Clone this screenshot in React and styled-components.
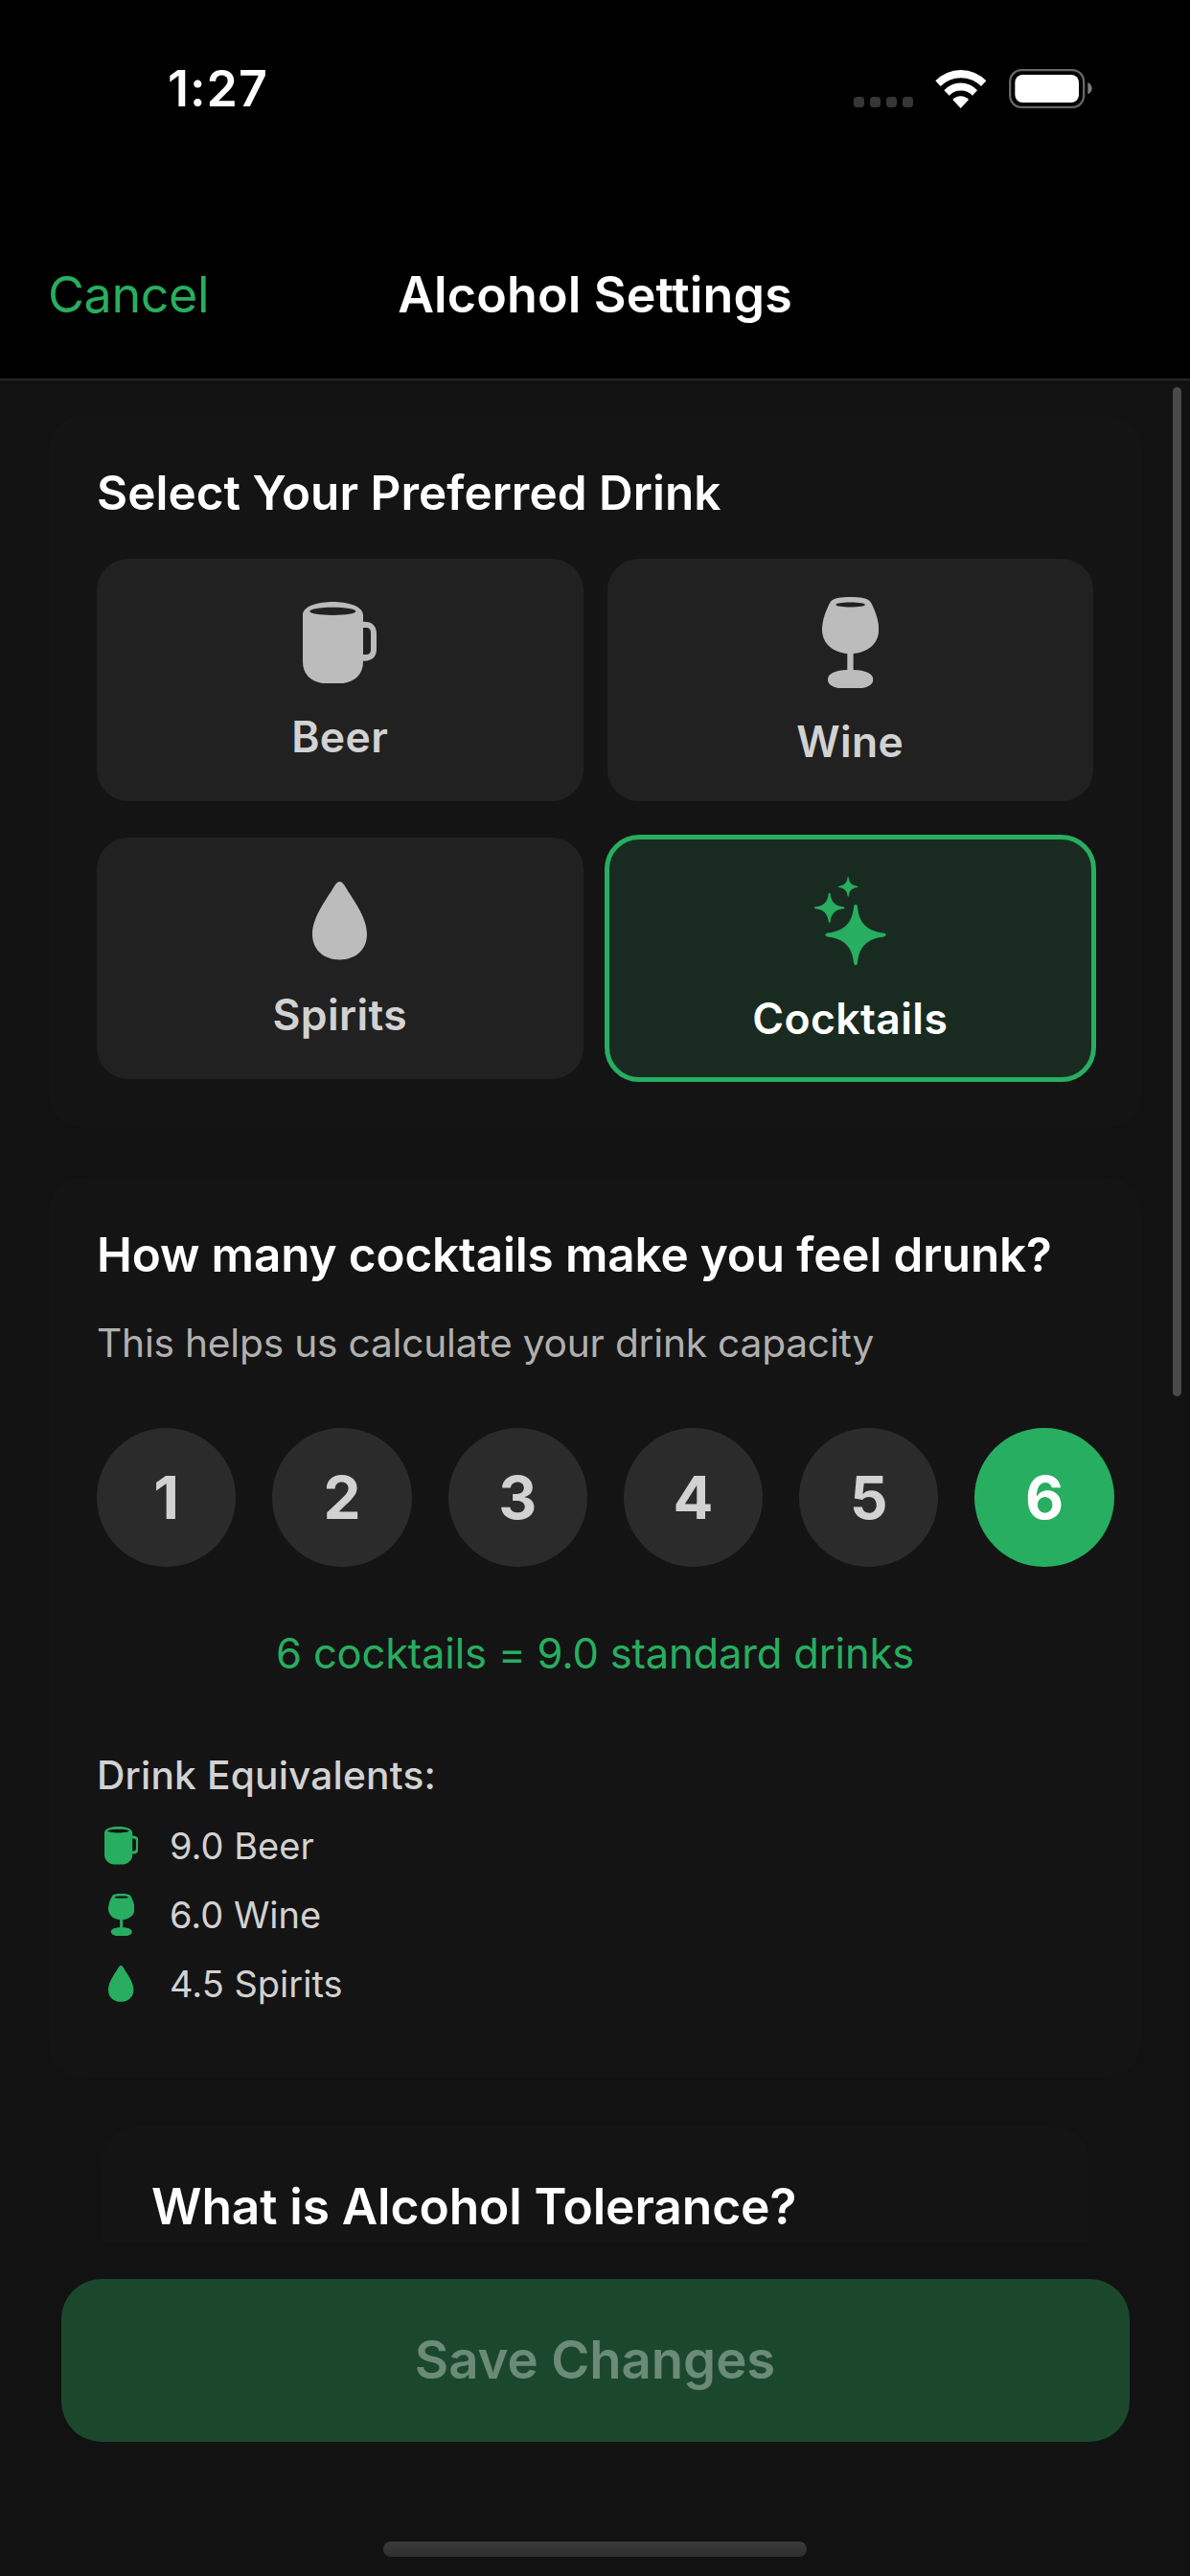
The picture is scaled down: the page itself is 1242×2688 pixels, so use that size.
import React, { useState } from "react";
import styled, { createGlobalStyle } from "styled-components";

const GREEN = "#27ae60";

const GlobalStyle = createGlobalStyle`
  *, *::before, *::after { box-sizing: border-box; }
  body {
    margin: 0;
    background: #121212;
    font-family: Inter, "Liberation Sans", sans-serif;
    -webkit-font-smoothing: antialiased;
  }
  button { font-family: inherit; border: 0; padding: 0; cursor: pointer; }
  h1, h2, p, ul { margin: 0; padding: 0; font-weight: inherit; }
`;

const Screen = styled.div`
  display: flex;
  flex-direction: column;
  width: 1242px;
  height: 2688px;
  overflow: hidden;
  background: #121212;
  color: #fff;
`;

const StatusBar = styled.div`
  display: flex;
  align-items: center;
  height: 185px;
  padding: 0 102px 0 175px;
  background: #000;
`;

const Time = styled.span`
  font-size: 52px;
  font-weight: 600;
  line-height: 64px;
  letter-spacing: 1px;
`;

const StatusIcons = styled.div`
  display: flex;
  align-items: center;
  gap: 23px;
  margin-left: auto;
`;

const SignalDots = styled.div`
  display: flex;
  gap: 6px;
  margin-top: 28px;
`;

const Dot = styled.span`
  width: 11px;
  height: 11px;
  border-radius: 3.5px;
  background: #363636;
`;

const NavBar = styled.header`
  display: grid;
  grid-template-columns: 1fr auto 1fr;
  align-items: center;
  height: 212px;
  padding: 36px 50px 0;
  background: #000;
  border-bottom: 2px solid #262626;
`;

const CancelButton = styled.button`
  justify-self: start;
  background: none;
  color: ${GREEN};
  font-size: 52px;
  font-weight: 400;
  line-height: 64px;
  letter-spacing: -0.39px;
`;

const NavTitle = styled.h1`
  font-size: 52px;
  font-weight: 600;
  line-height: 64px;
  letter-spacing: 0.12px;
`;

const ScrollArea = styled.main`
  position: relative;
  display: flex;
  flex-direction: column;
  gap: 51px;
  height: 1943px;
  padding: 36px 51px 0;
  overflow: hidden;
`;

const ScrollThumb = styled.div`
  position: absolute;
  top: 7px;
  right: 9px;
  width: 9px;
  height: 1053px;
  border-radius: 5px;
  background: #4a4a4a;
`;

const Card = styled.section`
  flex: none;
  height: ${(p) => p.$height}px;
  margin: 0 ${(p) => p.$inset || 0}px;
  padding: 50px 50px 0;
  border-radius: 36px;
  background: #141414;
`;

const CardTitle = styled.h2`
  font-size: ${(p) => (p.$large ? 51.5 : 49.4)}px;
  font-weight: 600;
  line-height: ${(p) => (p.$large ? 66 : 62)}px;
  letter-spacing: ${(p) => p.$tracking}px;
  padding-left: ${(p) => (p.$large ? 2 : 0)}px;
  white-space: nowrap;
`;

const DrinkGrid = styled.div`
  display: grid;
  grid-template-columns: 507.5px 507.5px;
  column-gap: 25px;
  row-gap: 38px;
  margin: 38px -1px 0 0;
`;

const DrinkTile = styled.button`
  display: flex;
  flex-direction: column;
  align-items: center;
  justify-content: flex-start;
  gap: ${(p) => p.$gap}px;
  height: 252.5px;
  padding-top: 39px;
  border-radius: 33px;
  background: ${(p) => (p.$selected ? "#192b20" : "#212121")};
  color: ${(p) => (p.$selected ? "#fff" : "#d2d2d2")};
  outline: ${(p) => (p.$selected ? `5px solid ${GREEN}` : "none")};
  outline-offset: -2.5px;
`;

const TileIcon = styled.span`
  display: flex;
  align-items: center;
  height: 97px;
  color: ${(p) => (p.$selected ? GREEN : "#bcbcbc")};
`;

const TileLabel = styled.span`
  font-size: 44.5px;
  font-weight: 600;
  line-height: 54px;
  letter-spacing: 0.4px;
`;

const Subtitle = styled.p`
  margin-top: 36.5px;
  color: #b0b0b0;
  font-size: 40.7px;
  line-height: 50px;
  letter-spacing: -0.22px;
`;

const CountRow = styled.div`
  display: flex;
  gap: 38px;
  margin-top: 63.5px;
`;

const CountButton = styled.button`
  flex: none;
  width: 145.3px;
  height: 145.3px;
  border-radius: 50%;
  background: ${(p) => (p.$selected ? GREEN : "#2b2b2b")};
  color: ${(p) => (p.$selected ? "#fff" : "#d2d2d2")};
  font-size: 62px;
  font-weight: 700;
  line-height: 145px;
`;

const Summary = styled.p`
  margin-top: 62.5px;
  color: ${GREEN};
  font-size: 43.5px;
  line-height: 54px;
  letter-spacing: -0.18px;
  text-align: center;
`;

const EquivalentsTitle = styled.p`
  margin-top: 76px;
  color: #d2d2d2;
  font-size: 40.7px;
  font-weight: 500;
  line-height: 50px;
  letter-spacing: 0.17px;
`;

const EquivalentsList = styled.ul`
  display: flex;
  flex-direction: column;
  margin-top: 12px;
  list-style: none;
`;

const EquivalentRow = styled.li`
  display: flex;
  align-items: center;
  gap: 25px;
  height: 72px;
  color: #d2d2d2;
  font-size: 38px;
  line-height: 48px;
`;

const EquivalentIcon = styled.span`
  display: flex;
  justify-content: center;
  width: 51px;
  color: ${GREEN};
`;

const Footer = styled.footer`
  display: flex;
  flex: 1;
  flex-direction: column;
  align-items: center;
  justify-content: space-between;
  padding: 38px 63.5px 20px;
  background: #121212;
`;

const SaveButton = styled.button`
  width: 1115px;
  height: 169.7px;
  padding-bottom: 2px;
  border-radius: 42px;
  background: #1b482d;
  color: #6b8b78;
  font-size: 54.5px;
  font-weight: 600;
  letter-spacing: -0.07px;
`;

const HomeIndicator = styled.div`
  width: 442px;
  height: 16px;
  border-radius: 8px;
  background: linear-gradient(#3b3b3b, #2f2f2f);
`;

function BeerIcon({ width }) {
  return (
    <svg width={width} height={(width * 256) / 231} viewBox="78 51 231 256" fill="currentColor" fillRule="evenodd">
      <path d="M78 92C78 63 130 51 172 51S267 63 267 92V113H271C295 113 309 126 309 150V199C309 223 295 236 271 236H267V240C267 281 235 307 190 307H155C110 307 78 281 78 240ZM100 80.500C100 88 132 93 172 93S244 88 244 80.500S212 68 172 68S100 73 100 80.500ZM267 132V216H275C287 216 291 210 291 200V148C291 138 287 132 275 132Z" />
    </svg>
  );
}

function WineIcon({ width }) {
  return (
    <svg width={width} height={(width * 288) / 178} viewBox="52 35 178 288" fill="currentColor" fillRule="evenodd">
      <path d="M141 35C170 35 197 38 205 52C218 75 230 110 230 136C230 178 200 207 150 212V263C188 264 212 274 212 293C212 313 188 323 141 323S70 313 70 293C70 274 94 264 131 263V212C82 207 52 178 52 136C52 110 64 75 77 52C85 38 112 35 141 35ZM95 59C95 63 115 66.500 141 66.500S187 63 187 59S167 51.500 141 51.500S95 55 95 59Z" />
    </svg>
  );
}

function DropIcon({ width }) {
  return (
    <svg width={width} height={(width * 113) / 79} viewBox="0 0 79 113" fill="currentColor">
      <path d="M39.500 0C42.500 0 44.500 2 47.500 7C58 25 79 51 79 76C79 99 62 113 39.500 113S0 99 0 76C0 51 21 25 31.500 7C34.500 2 36.500 0 39.500 0Z" />
    </svg>
  );
}

const STAR =
  "M0 -95Q5 -95 6 -88C10 -38 36 -12 88 -6Q95 -5 95 0Q95 5 88 6C36 12 10 38 6 88Q5 95 0 95Q-5 95 -6 88C-10 38 -36 12 -88 6Q-95 5 -95 0Q-95 -5 -88 -6C-36 -12 -10 -38 -6 -88Q-5 -95 0 -95Z";

function SparklesIcon({ width }) {
  return (
    <svg width={width} height={(width * 277) / 224} viewBox="30 42 224 277" fill="currentColor">
      <path d={STAR} transform="translate(159 223.500)" />
      <path d={STAR} transform="translate(77 139) scale(0.495)" />
      <path d={STAR} transform="translate(135.500 73) scale(0.325)" />
    </svg>
  );
}

function WifiIcon() {
  return (
    <svg width="53.700" height="40" viewBox="317 67 161 120" fill="#fff">
      <path d="M318 101A110 110 0 0 1 477 101L461 118A90.500 90.500 0 0 0 334 118Z" />
      <path d="M345 131A69 69 0 0 1 449 131L434 147A50 50 0 0 0 361 147Z" />
      <path d="M372 160A34 34 0 0 1 422 160L397 187Z" />
    </svg>
  );
}

function BatteryIcon() {
  return (
    <svg width="87" height="41" viewBox="547 65 261 123">
      <rect x="550.500" y="68.500" width="231" height="116" rx="36" fill="none" stroke="#666" strokeWidth="7" />
      <rect x="566" y="83" width="200" height="87" rx="24" fill="#fff" />
      <path d="M794 107Q807 114 807 126T794 144Z" fill="#7d7d7d" />
    </svg>
  );
}

const DRINKS = [
  { name: "Beer", Icon: BeerIcon, width: 77, gap: 22.5 },
  { name: "Wine", Icon: WineIcon, width: 59.3, gap: 28 },
  { name: "Spirits", Icon: DropIcon, width: 57, gap: 22.5 },
  { name: "Cocktails", Icon: SparklesIcon, width: 74.7, gap: 26.5 },
];

const COUNTS = [1, 2, 3, 4, 5, 6];

const EQUIVALENTS = [
  { text: "9.0 Beer", Icon: BeerIcon, width: 35.7 },
  { text: "6.0 Wine", Icon: WineIcon, width: 27.5 },
  { text: "4.5 Spirits", Icon: DropIcon, width: 26.4 },
];

export default function App() {
  const [drink, setDrink] = useState("Cocktails");
  const [count, setCount] = useState(6);

  return (
    <>
      <GlobalStyle />
      <Screen>
        <StatusBar>
          <Time>1:27</Time>
          <StatusIcons>
            <SignalDots>
              <Dot />
              <Dot />
              <Dot />
              <Dot />
            </SignalDots>
            <WifiIcon />
            <BatteryIcon />
          </StatusIcons>
        </StatusBar>

        <NavBar>
          <CancelButton>Cancel</CancelButton>
          <NavTitle>Alcohol Settings</NavTitle>
        </NavBar>

        <ScrollArea>
          <Card $height={744}>
            <CardTitle $tracking={0.06}>Select Your Preferred Drink</CardTitle>
            <DrinkGrid>
              {DRINKS.map(({ name, Icon, width, gap }) => {
                const selected = drink === name;
                return (
                  <DrinkTile key={name} $gap={gap} $selected={selected} onClick={() => setDrink(name)}>
                    <TileIcon $selected={selected}>
                      <Icon width={width} />
                    </TileIcon>
                    <TileLabel>{name}</TileLabel>
                  </DrinkTile>
                );
              })}
            </DrinkGrid>
          </Card>

          <Card $height={940}>
            <CardTitle $tracking={-0.11}>How many cocktails make you feel drunk?</CardTitle>
            <Subtitle>This helps us calculate your drink capacity</Subtitle>
            <CountRow>
              {COUNTS.map((n) => (
                <CountButton key={n} $selected={n === count} onClick={() => setCount(n)}>
                  {n}
                </CountButton>
              ))}
            </CountRow>
            <Summary>6 cocktails = 9.0 standard drinks</Summary>
            <EquivalentsTitle>Drink Equivalents:</EquivalentsTitle>
            <EquivalentsList>
              {EQUIVALENTS.map(({ text, Icon, width }) => (
                <EquivalentRow key={text}>
                  <EquivalentIcon>
                    <Icon width={width} />
                  </EquivalentIcon>
                  <span>{text}</span>
                </EquivalentRow>
              ))}
            </EquivalentsList>
          </Card>

          <Card $height={600} $inset={55}>
            <CardTitle $large $tracking={-0.1}>What is Alcohol Tolerance?</CardTitle>
          </Card>
          <ScrollThumb />
        </ScrollArea>

        <Footer>
          <SaveButton>Save Changes</SaveButton>
          <HomeIndicator />
        </Footer>
      </Screen>
    </>
  );
}
